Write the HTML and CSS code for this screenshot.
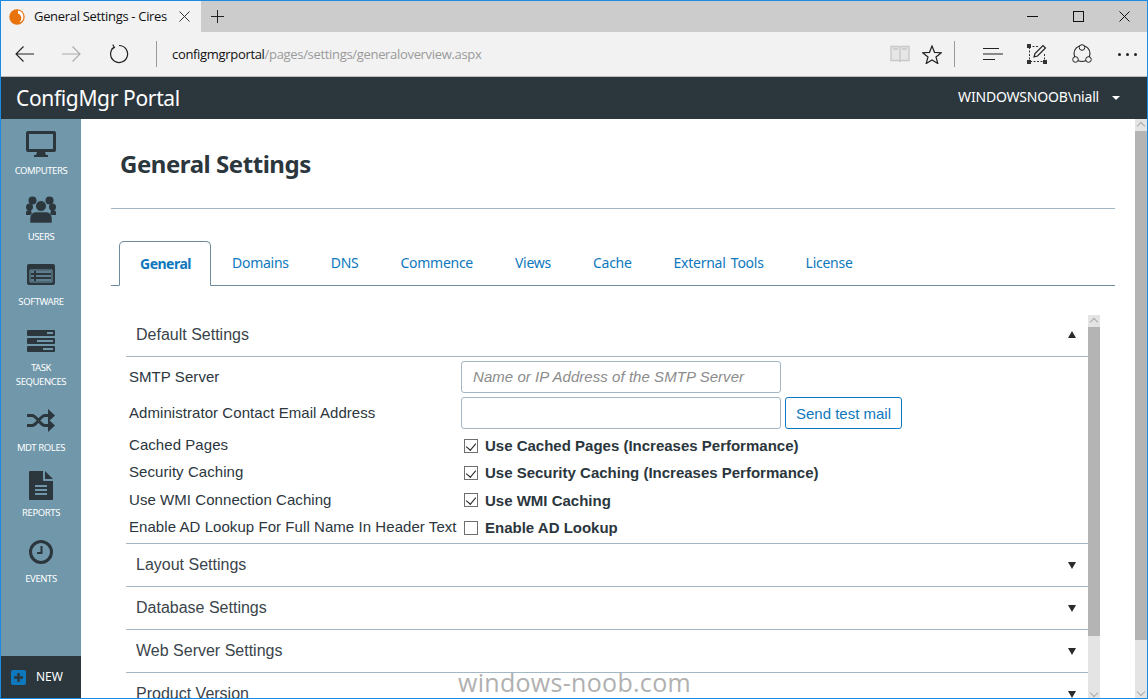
FILE: index.html
```html
<!DOCTYPE html>
<html lang="en">
<head>
<meta charset="utf-8">
<title>General Settings - Cires</title>
<link rel="stylesheet" href="styles.css">
</head>
<body>
<div class="window">
  <div class="tabbar">
    <div class="browser-tab">
      <svg class="favicon" width="16" height="16" viewBox="0 0 16 16"><circle cx="8" cy="8" r="7.7" fill="#e8720c"/><path d="M9 1.6a6.5 6.5 0 0 1 5.4 6.4 6 6 0 0 1-4 5.6 6.2 6.2 0 0 0 1.9-5.4A5 5 0 0 0 9 4.6z" fill="#fff"/></svg>
      <span class="browser-tab-title">General Settings - Cires</span>
      <svg class="tab-close" width="11" height="11" viewBox="0 0 11 11"><path d="M.5.5l10 10M10.500.5l-10 10" stroke="#333" fill="none"/></svg>
    </div>
    <svg class="tab-new" width="13" height="13" viewBox="0 0 13 13"><path d="M6.500 0v13M0 6.500h13" stroke="#222" fill="none"/></svg>
    <div class="winctl">
      <svg width="11" height="11" viewBox="0 0 11 11"><path d="M0 5.500h11" stroke="#111" fill="none"/></svg>
      <svg width="11" height="11" viewBox="0 0 11 11"><rect x=".5" y=".5" width="10" height="10" stroke="#111" fill="none"/></svg>
      <svg width="11" height="11" viewBox="0 0 11 11"><path d="M.5.500l10 10M10.500.5l-10 10" stroke="#111" fill="none"/></svg>
    </div>
  </div>
  <div class="toolbar">
    <svg class="t-back" width="19" height="16" viewBox="0 0 19 16"><path d="M19 8H1M8.500.5L1 8l7.500 7.500" stroke="#222" stroke-width="1.100" fill="none"/></svg>
    <svg class="t-fwd" width="19" height="16" viewBox="0 0 19 16"><path d="M0 8h18M10.500.5L18 8l-7.500 7.500" stroke="#aaa" stroke-width="1.100" fill="none"/></svg>
    <svg class="t-refresh" width="20" height="20" viewBox="0 0 20 20"><path d="M5 3.200A8.500 8.500 0 1 0 10 1.500" stroke="#222" stroke-width="1.200" fill="none"/><path d="M3.700 .6L5.500 3.500 2.500 5" stroke="#222" stroke-width="1.100" fill="none"/></svg>
    <span class="t-sep t-sep-a"></span>
    <div class="address"><span class="host">configmgrportal</span><span class="path">/pages/settings/generaloverview.aspx</span></div>
    <svg class="t-read" width="20" height="18" viewBox="0 0 20 18"><path d="M1 1.500h8l1 1 1-1h8v14h-8l-1 1-1-1H1zM10 2.500v14M3 4h5M12 4h5" stroke="#c8c8c8" stroke-width="1.400" fill="#e6e6e6"/></svg>
    <svg class="t-star" width="20" height="19" viewBox="0 0 20 19"><path d="M10 1l2.500 6.300 6.800.4-5.300 4.300 1.800 6.500L10 14.900l-5.800 3.600L6 12 .7 7.700l6.800-.4z" stroke="#222" stroke-width="1.200" fill="none"/></svg>
    <span class="t-sep t-sep-b"></span>
    <svg class="t-hub" width="20" height="14" viewBox="0 0 20 14"><path d="M0 1.500h16M0 7h20M0 12.500h12" stroke="#222" stroke-width="1.200" fill="none"/></svg>
    <svg class="t-note" width="20" height="20" viewBox="0 0 20 20"><path d="M2 2.500h9M2.500 3v14M3 17.500h14M17.500 10v7" stroke="#333" stroke-dasharray="2 1.500" fill="none"/><path d="M0 0h4v4H0zM0 16h4v4H0zM16 16h4v4h-4z" fill="#333"/><path d="M7 13l1-3.500L16 1.500l2.500 2.500-8 8z" stroke="#222" stroke-width="1.200" fill="#f2f2f2"/></svg>
    <svg class="t-share" width="20" height="20" viewBox="0 0 20 20"><circle cx="10" cy="9.500" r="8" stroke="#222" stroke-width="1.100" fill="none"/><circle cx="10" cy="3.500" r="2.800" stroke="#222" fill="#f2f2f2"/><circle cx="3.500" cy="15.500" r="2.800" stroke="#222" fill="#f2f2f2"/><circle cx="16.500" cy="15.500" r="2.800" stroke="#222" fill="#f2f2f2"/></svg>
    <div class="t-more"><i></i><i></i><i></i></div>
  </div>
  <header class="appbar">
    <div class="brand">ConfigMgr Portal</div>
    <div class="user">WINDOWSNOOB\niall<span class="caret"></span></div>
  </header>
  <div class="body">
    <nav class="sidebar">
      <div class="nav-items">
        <a class="nav-item"><span class="nav-icon"><svg width="30" height="26" viewBox="0 0 30 26"><path d="M2 0h26a2 2 0 0 1 2 2v17a2 2 0 0 1-2 2H2a2 2 0 0 1-2-2V2a2 2 0 0 1 2-2zm1 3v15h24V3zM11 21h8l1 3h2v2H8v-2h2z" fill="#2b363d" fill-rule="evenodd"/></svg></span><span class="nav-label">COMPUTERS</span></a>
        <a class="nav-item"><span class="nav-icon"><svg width="30" height="27" viewBox="0 0 30 27"><circle cx="6.500" cy="4.500" r="4" fill="#2b363d"/><circle cx="23.500" cy="4.500" r="4" fill="#2b363d"/><circle cx="3.500" cy="11" r="3.500" fill="#2b363d"/><circle cx="26.500" cy="11" r="3.500" fill="#2b363d"/><path d="M0 17c0-3 2-3 5-3l1 5H0zM30 17c0-3-2-3-5-3l-1 5h6z" fill="#2b363d"/><circle cx="15" cy="10" r="5.500" fill="#2b363d" stroke="#7097aa"/><path d="M4 27v-4c0-6 4-7 6-7h10c2 0 6 1 6 7v4z" fill="#2b363d" stroke="#7097aa" stroke-width=".6"/></svg></span><span class="nav-label">USERS</span></a>
        <a class="nav-item"><span class="nav-icon"><svg width="28" height="21" viewBox="0 0 28 21"><path d="M2 0h24a2 2 0 0 1 2 2v17a2 2 0 0 1-2 2H2a2 2 0 0 1-2-2V2a2 2 0 0 1 2-2z" fill="#2b363d"/><path d="M3 6h22v12H3z" fill="#2b363d" stroke="#7097aa"/><path d="M4 8h3M9 8h15M4 12h3M9 12h15M4 16h3M9 16h15" stroke="#7097aa" stroke-width="1.500"/></svg></span><span class="nav-label">SOFTWARE</span></a>
        <a class="nav-item"><span class="nav-icon"><svg width="28" height="22" viewBox="0 0 28 22"><path d="M1 0h26a1 1 0 0 1 1 1v4a1 1 0 0 1-1 1H1a1 1 0 0 1-1-1V1a1 1 0 0 1 1-1zM1 8h26a1 1 0 0 1 1 1v4a1 1 0 0 1-1 1H1a1 1 0 0 1-1-1V9a1 1 0 0 1 1-1zM1 16h26a1 1 0 0 1 1 1v4a1 1 0 0 1-1 1H1a1 1 0 0 1-1-1v-4a1 1 0 0 1 1-1z" fill="#2b363d"/><path d="M20 3h6M10 11h16M16 19h10" stroke="#7097aa" stroke-width="2"/></svg></span><span class="nav-label">TASK SEQUENCES</span></a>
        <a class="nav-item"><span class="nav-icon"><svg width="28" height="23" viewBox="0 0 28 23"><path d="M0 6.500h5c5 0 8 10 13 10h5M0 16.500h5c5 0 8-10 13-10h5" stroke="#2b363d" stroke-width="3" fill="none"/><path d="M21 0l7 6.500-7 6.500zM21 10l7 6.500-7 6.500z" fill="#2b363d"/></svg></span><span class="nav-label">MDT ROLES</span></a>
        <a class="nav-item"><span class="nav-icon"><svg width="24" height="29" viewBox="0 0 24 29"><path d="M1 0h13v9a1 1 0 0 0 1 1h9v18a1 1 0 0 1-1 1H1a1 1 0 0 1-1-1V1a1 1 0 0 1 1-1zM16 0l8 8h-8z" fill="#2b363d"/><path d="M6 15h12M6 19h12M6 23h12" stroke="#7097aa" stroke-width="2"/></svg></span><span class="nav-label">REPORTS</span></a>
        <a class="nav-item"><span class="nav-icon"><svg width="24" height="24" viewBox="0 0 24 24"><circle cx="12" cy="12" r="10.500" stroke="#2b363d" stroke-width="3" fill="none"/><path d="M12.500 6v7H8" stroke="#2b363d" stroke-width="2" fill="none"/></svg></span><span class="nav-label">EVENTS</span></a>
      </div>
      <a class="new-btn"><svg width="15" height="15" viewBox="0 0 15 15"><rect width="15" height="15" rx="2" fill="#0d78bd"/><path d="M7.500 3v9M3 7.500h9" stroke="#2b363d" stroke-width="2.500"/></svg><span>NEW</span></a>
    </nav>
    <main class="main">
      <h1 class="page-title">General Settings</h1>
      <ul class="tabs">
        <li class="tab active">General</li>
        <li class="tab">Domains</li>
        <li class="tab">DNS</li>
        <li class="tab">Commence</li>
        <li class="tab">Views</li>
        <li class="tab">Cache</li>
        <li class="tab">External Tools</li>
        <li class="tab">License</li>
      </ul>
      <div class="panel">
        <div class="accordion">
          <section class="acc-open">
            <div class="acc-head first"><span>Default Settings</span><span class="tri-up"></span></div>
            <div class="form">
              <div class="row row-input"><label>SMTP Server</label><span class="input placeholder">Name or IP Address of the SMTP Server</span></div>
              <div class="row row-input"><label>Administrator Contact Email Address</label><span class="input"></span><button class="btn">Send test mail</button></div>
              <div class="checks">
                <div class="row row-check"><label>Cached Pages</label><span class="check on"></span><b>Use Cached Pages (Increases Performance)</b></div>
                <div class="row row-check"><label>Security Caching</label><span class="check on"></span><b>Use Security Caching (Increases Performance)</b></div>
                <div class="row row-check"><label>Use WMI Connection Caching</label><span class="check on"></span><b>Use WMI Caching</b></div>
                <div class="row row-check"><label>Enable AD Lookup For Full Name In Header Text</label><span class="check"></span><b>Enable AD Lookup</b></div>
              </div>
            </div>
          </section>
          <div class="acc-head closed"><span>Layout Settings</span><span class="tri-down"></span></div>
          <div class="acc-head closed"><span>Database Settings</span><span class="tri-down"></span></div>
          <div class="acc-head closed"><span>Web Server Settings</span><span class="tri-down"></span></div>
          <div class="acc-head closed"><span>Product Version</span><span class="tri-down"></span></div>
        </div>
        <div class="scroll inner-scroll"><span class="sb-up"></span><span class="sb-thumb"></span><span class="sb-track"></span></div>
      </div>
    </main>
    <div class="scroll outer-scroll"><span class="sb-up"></span><span class="sb-thumb"></span><span class="sb-track"></span></div>
  </div>
  <div class="watermark">windows-noob.com</div>
</div>
</body>
</html>
```

FILE: styles.css
```css
* { box-sizing: border-box; }
html, body { margin: 0; height: 100%; overflow: hidden; }
body { font-family: "Liberation Sans", Arial, sans-serif; background: #fff; }
.window { position: relative; width: 1148px; height: 699px; border: 1px solid #1a8ae2; display: flex; flex-direction: column; overflow: hidden; }

.tabbar { height: 31px; flex: none; background: #ccc; display: flex; align-items: center; }
.browser-tab { width: 200px; height: 31px; background: #f2f2f2; display: flex; align-items: center; padding-left: 8px; font: 13px/1 "Open Sans", sans-serif; color: #111; }
.browser-tab-title { margin-left: 9px; white-space: nowrap; width: 134px; letter-spacing: -.32px; }
.favicon { flex: none; }
.tab-close { margin-left: 11px; }
.tab-new { margin-left: 10px; }
.winctl { margin-left: auto; display: flex; gap: 35px; margin-right: 17px; }
.winctl svg { display: block; }

.toolbar { height: 45px; flex: none; background: #f2f2f2; border-bottom: 1px solid #bdbdbd; display: flex; align-items: center; padding-left: 14px; }
.toolbar svg { flex: none; }
.t-fwd { margin-left: 28px; }
.t-refresh { margin-left: 28px; }
.t-sep { width: 1px; height: 26px; background: #999; flex: none; }
.t-sep-a { margin-left: 27px; }
.address { margin-left: 15px; width: 718px; font: 13px/1 "Open Sans", sans-serif; white-space: nowrap; letter-spacing: -.32px; }
.host { color: #111; }
.path { color: #9a9a9a; }
.t-star { margin-left: 12px; }
.t-sep-b { margin-left: 12px; }
.t-hub { margin-left: 28px; }
.t-note { margin-left: 24px; }
.t-share { margin-left: 25px; }
.t-more { margin-left: 26px; display: flex; gap: 5px; }
.t-more i { width: 3px; height: 3px; background: #222; border-radius: 50%; display: block; }

.appbar { height: 42px; flex: none; background: #2b363d; display: flex; align-items: center; justify-content: space-between; color: #fff; }
.brand { margin-left: 15px; font: 21px/1 "Noto Sans", sans-serif; letter-spacing: -.35px; }
.user { margin-right: 27px; padding-bottom: 2px; font: 14px/1 "Noto Sans", sans-serif; letter-spacing: -.2px; display: flex; align-items: center; }
.caret { width: 0; height: 0; border: 4px solid transparent; border-top-color: #fff; border-bottom: 0; margin-left: 13px; margin-top: 2px; }

.body { flex: 1; min-height: 0; display: flex; }
.sidebar { width: 80px; flex: none; background: #7097aa; display: flex; flex-direction: column; justify-content: space-between; }
.nav-items { padding-top: 8px; }
.nav-item { display: flex; flex-direction: column; align-items: center; margin-bottom: 14.700px; }
.nav-icon { height: 33px; display: flex; align-items: center; justify-content: center; margin-bottom: 4px; }
.nav-icon svg { display: block; }
.nav-label { font: 9.500px/14px "Noto Sans", sans-serif; letter-spacing: -.4px; color: #fff; text-align: center; width: 66px; }
.new-btn { height: 42px; background: #2b363d; display: flex; align-items: center; padding-left: 10px; color: #fff; font: 12px/1 "Noto Sans", sans-serif; }
.new-btn span { margin-left: 10px; }

.main { flex: 1; min-width: 0; padding: 0 20px 0 30px; display: flex; flex-direction: column; overflow: hidden; }
.page-title { margin: 27px 0 0 9px; padding: 0; font: 700 24px/36px "Noto Sans", sans-serif; letter-spacing: -.45px; color: #2b363d; }
.tabs { list-style: none; margin: 26px 0 0; padding: 32px 0 0 8px; border-top: 1px solid #a3b7c4; border-bottom: 1px solid #6e8b9b; display: flex; font: 14px/1 "Noto Sans", sans-serif; letter-spacing: -.27px; word-spacing: 2px; color: #0d78bd; box-sizing: content-box; height: 44px; }
.tab { padding: 15px 21px 0; height: 45px; white-space: nowrap; }
.tab.active { font-weight: 700; letter-spacing: -.5px; color: #0d78bd; border: 1px solid #6e8b9b; border-bottom-color: #fff; border-radius: 5px 5px 0 0; background: #fff; padding: 15px 19px 0 20px; }

.panel { position: relative; margin: 29px 0 0 15px; flex: 1; min-height: 0; display: flex; }
.accordion { width: 962px; flex: none; color: #3a444b; }
.acc-head { height: 42px; display: flex; align-items: center; justify-content: space-between; padding: 0 12px 0 10px; font-size: 16px; border-bottom: 1px solid #a3b7c4; }
.acc-head.first { padding-bottom: 2px; }
.acc-head.closed { height: 43px; }
.tri-up, .tri-down { width: 0; height: 0; border-left: 4px solid transparent; border-right: 4px solid transparent; }
.tri-up { border-bottom: 7px solid #2b2b2b; }
.tri-down { border-top: 7px solid #2b2b2b; }

.form { height: 187px; padding: 4px 0 0 3px; border-bottom: 1px solid #a3b7c4; font-size: 15px; color: #2b363d; }
.row { display: flex; align-items: center; }
.row label { width: 332px; flex: none; white-space: nowrap; padding-bottom: 2px; letter-spacing: .06px; }
.row-input { height: 32px; margin-bottom: 4px; }
.input { width: 320px; height: 32px; border: 1px solid #a3b7c4; border-radius: 3px; padding: 0 11px; display: block; line-height: 29px; font-size: 15px; flex: none; background: #fff; letter-spacing: .05px; }
.placeholder { font-style: italic; color: #8c8c8c; }
.btn { margin-left: 4px; width: 117px; height: 32px; padding: 0; font: 15px "Liberation Sans", Arial, sans-serif; color: #0d78bd; background: #fff; border: 1px solid #0d78bd; border-radius: 3px; }
.checks { margin-top: -1px; }
.row-check { height: 27.300px; }
.row-check b { color: #2b363d; font-weight: 700; margin-left: 7px; white-space: nowrap; }
.check { position: relative; width: 14px; height: 14px; border: 1px solid #6f6f6f; margin-left: 3px; flex: none; background: #fff; }
.check.on::after { content: ""; position: absolute; left: 3px; top: 1px; width: 5px; height: 8px; border: solid #222; border-width: 0 1px 1px 0; transform: rotate(40deg); }

.scroll { width: 12px; flex: none; background: #e4e4e4; display: flex; flex-direction: column; }
.sb-up { height: 12px; flex: none; position: relative; }
.sb-up::after { content: ""; position: absolute; left: 3px; top: 4px; width: 5px; height: 5px; border: solid #aaa; border-width: 1px 0 0 1px; transform: rotate(45deg); }
.sb-thumb { background: #b4b4b4; flex: none; }
.sb-track { flex: 1; position: relative; }
.sb-track::after { content: ""; position: absolute; left: 3px; bottom: 3px; width: 5px; height: 5px; border: solid #aaa; border-width: 0 1px 1px 0; transform: rotate(45deg); }
.inner-scroll { height: 384px; }
.inner-scroll .sb-thumb { height: 309px; }
.outer-scroll .sb-thumb { height: 509px; }

.watermark { position: absolute; left: 457px; top: 669px; font: 400 25px/1 "Open Sans", sans-serif; letter-spacing: .3px; color: #b0b0b0; white-space: nowrap; }
```
